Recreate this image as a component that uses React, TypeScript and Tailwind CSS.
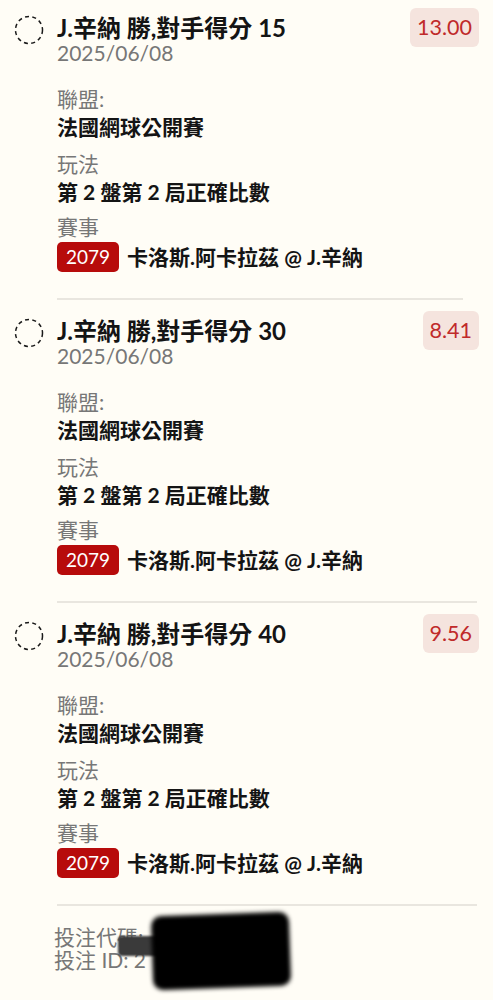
import React from 'react';

type Bet = { score: string; odds: string; lineEnd: string; top: string };

const bets: Bet[] = [
  { score: '15', odds: '13.00', lineEnd: 'mr-[30px]', top: 'pt-[14px]' },
  { score: '30', odds: '8.41', lineEnd: 'mr-4', top: 'pt-[17px]' },
  { score: '40', odds: '9.56', lineEnd: 'mr-4', top: 'pt-[17px]' },
];

const font = "font-['Lato','Noto_Sans_CJK_TC',sans-serif]";

const DashedCircle = () => (
  <svg width="30" height="30" viewBox="0 0 30 30" className="shrink-0">
    <circle cx="15" cy="15" r="13.5" fill="none" stroke="#1a1a1a" strokeWidth="1.5" strokeDasharray="4 3.4" />
  </svg>
);

const BetRow: React.FC<{ bet: Bet }> = ({ bet }) => (
  <div>
    <div className={`flex items-start px-[14px] ${bet.top}`}>
      <div className="pt-[1px]">
        <DashedCircle />
      </div>
      <div className="ml-[13px] flex-1">
        <div className="text-[24px] font-bold leading-[28px] text-[#141414]">J.辛納 勝,對手得分 {bet.score}</div>
        <div className="text-[21px] leading-[22px] text-[#777777]">2025/06/08</div>
      </div>
      <div className="-mt-[6px] rounded-md bg-[#f5e4de] px-[7px] py-[4px] text-[21.5px] leading-[31px] text-[#c02a2a]">
        {bet.odds}
      </div>
    </div>

    <div className="pl-[57px] pt-[21px]">
      <div className="text-[21px] leading-[28px] text-[#777777]">聯盟:</div>
      <div className="text-[21px] font-bold leading-[28px] text-[#141414]">法國網球公開賽</div>
      <div className="mt-[9px] text-[21px] leading-[28px] text-[#777777]">玩法</div>
      <div className="text-[21px] font-bold leading-[28px] text-[#141414]">第 2 盤第 2 局正確比數</div>
      <div className="mt-[7px] text-[21px] leading-[28px] text-[#777777]">賽事</div>
      <div className="mt-[1px] flex items-center gap-[8px]">
        <span className="rounded-[5px] bg-[#b70b0b] px-[9px] text-[19px] leading-[30px] text-white">2079</span>
        <span className="text-[21px] font-bold leading-[30px] text-[#141414]">卡洛斯.阿卡拉茲 @ J.辛納</span>
      </div>
    </div>

    <div className={`ml-[57px] ${bet.lineEnd} mt-[26px] h-[2px] bg-[#e9e6df]`} />
  </div>
);

export default function App() {
  return (
    <div className={`${font} min-h-[1000px] w-full bg-[#fffdf6]`}>
      {bets.map((b) => (
        <BetRow key={b.score} bet={b} />
      ))}

      <div className="relative pl-[54px] pt-[19px] text-[21px] leading-[23px] text-[#777777]">
        <div>投注代碼:</div>
        <div>投注 ID: 2</div>
        <div className="absolute left-[118px] top-[30px] h-[20px] w-[45px] rounded-sm bg-[#3a3a3a] blur-[1px]" />
        <div className="absolute left-[152px] top-[8px] h-[74px] w-[138px] -rotate-2 rounded-[10px] bg-black blur-[2px]" />
      </div>
    </div>
  );
}
